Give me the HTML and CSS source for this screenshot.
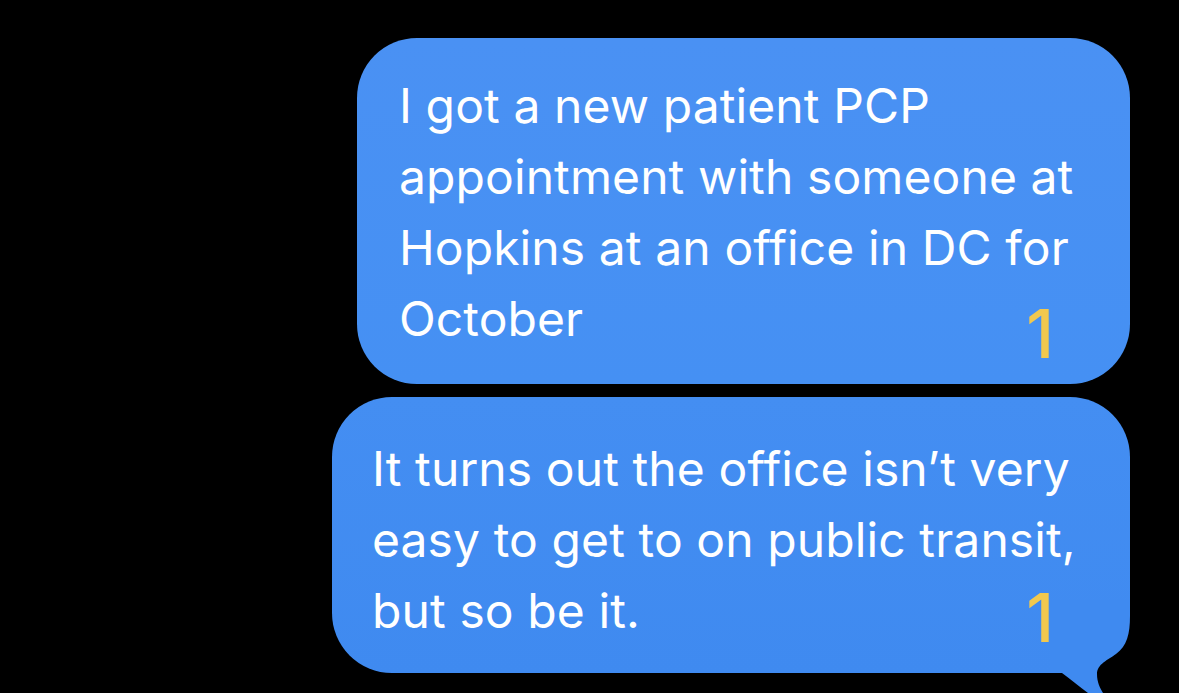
FILE: index.html
```html
<!DOCTYPE html>
<html lang="en">
<head>
  <meta charset="UTF-8"/>
  <meta name="viewport" content="width=device-width, initial-scale=1.0"/>
  <title>Messages</title>
  <link rel="stylesheet" href="styles.css">
</head>
<body>

<div class="thread">
  <div class="bubble first">
    <p class="text">I got a new patient PCP<br>appointment with someone at<br>Hopkins at an office in DC for<br>October</p>
    <span class="mark">1</span>
  </div>

  <div class="bubble last">
    <p class="text">It turns out the office isn’t very<br>easy to get to on public transit,<br>but so be it.</p>
    <span class="mark">1</span>
    <svg class="tail" width="80" height="93" viewBox="0 0 80 93" aria-hidden="true">
      <rect x="0" y="0" width="80" height="93" fill="#000"/>
      <path d="M0,0 H80 V16 C80,34 77,46 66,54 C58,60 47,64 47,74 C47,82 50,88 53,93 H38 C30,87 20,79 12,73 H0 Z" fill="#3f8af0"/>
    </svg>
  </div>
</div>

</body>
</html>
```

FILE: styles.css
```css
body {
  margin: 0;
  background-color: #000;
  font-family: Inter, "Noto Sans", sans-serif;
  overflow: hidden;
  height: 693px;
}

.thread {
  display: flex;
  flex-direction: column;
  align-items: flex-end;
  gap: 13px;
  padding: 38px 49px 0 0;
}

.bubble {
  position: relative;
  box-sizing: border-box;
  color: #fff;
  border-radius: 60px;
}

.bubble.first {
  width: 773px;
  height: 346px;
  padding: 32px 0 0 42px;
  background: linear-gradient(180deg, #4a91f3 0%, #4590f3 100%);
}

.bubble.last {
  width: 798px;
  height: 276px;
  padding: 36px 0 0 40px;
  border-bottom-right-radius: 0;
  background: linear-gradient(180deg, #448ef2 0%, #3f8af0 100%);
}

.text {
  margin: 0;
  font-size: 48px;
  line-height: 71px;
  letter-spacing: 0.1px;
}

.mark {
  position: absolute;
  right: 76px;
  font-size: 67px;
  font-weight: 500;
  line-height: 67px;
  color: #f1c84e;
}

.first .mark {
  bottom: 17px;
}

.last .mark {
  bottom: 22px;
}

.tail {
  position: absolute;
  right: 0;
  top: 203px;
  display: block;
}
```
